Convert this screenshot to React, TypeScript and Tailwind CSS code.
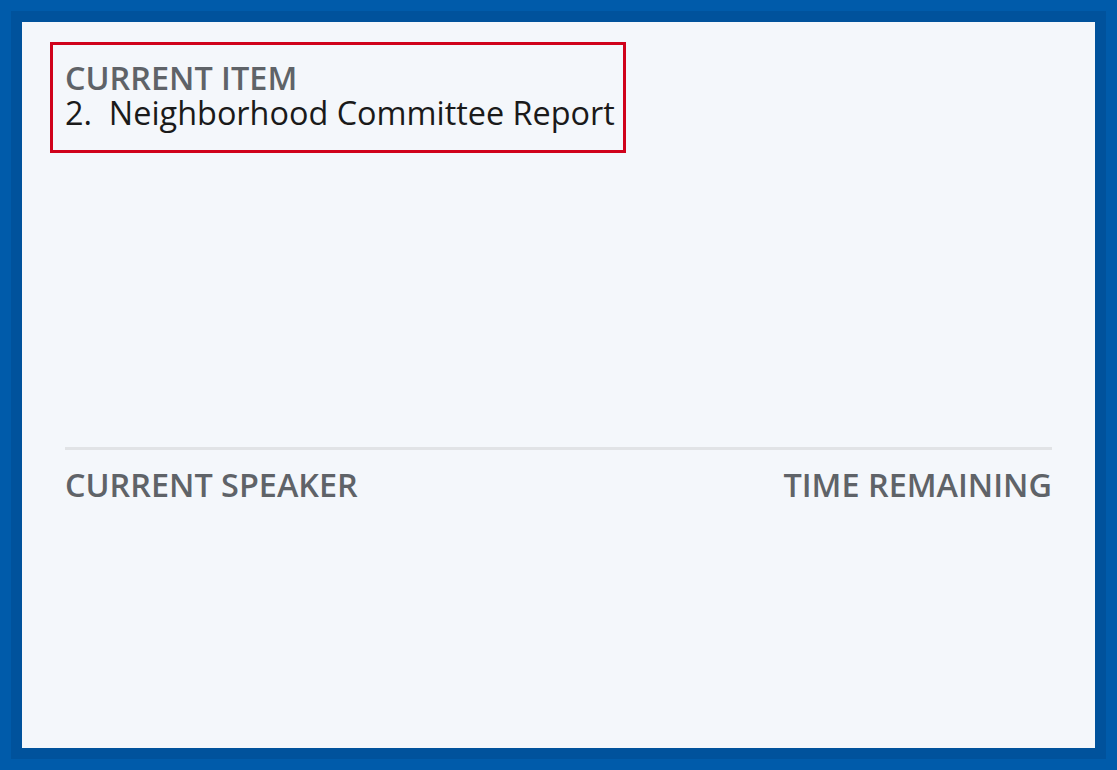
import React from "react";

export default function App() {
  return (
    <div className="w-[1117px] h-[770px] bg-[#005baa] p-[11px]" style={{ fontFamily: '"Open Sans", "Noto Sans", sans-serif' }}>
      <div className="h-full bg-[#00529c] p-[11px]">
        <div className="h-full bg-[#f4f7fb] px-[43px] pt-[20px] flex flex-col">
          <div className="h-[405px] shrink-0">
            <div className="w-fit -ml-[15px] border-[3px] border-[#d0021b] pl-[12px] pr-[8px] pt-[15px] pb-[20px]">
              <div className="text-[32.4px] leading-[35px] font-semibold text-[#5f6368]">CURRENT ITEM</div>
              <div className="text-[32.4px] leading-[35px] text-[#1a1a1a]">2.&nbsp;&nbsp;Neighborhood Committee Report</div>
            </div>
          </div>
          <div className="border-t-[3px] border-[#e1e3e6]" />
          <div className="flex justify-between pt-[16px] text-[32.4px] leading-[36px] font-semibold text-[#5f6368]">
            <div>CURRENT SPEAKER</div>
            <div>TIME REMAINING</div>
          </div>
        </div>
      </div>
    </div>
  );
}
